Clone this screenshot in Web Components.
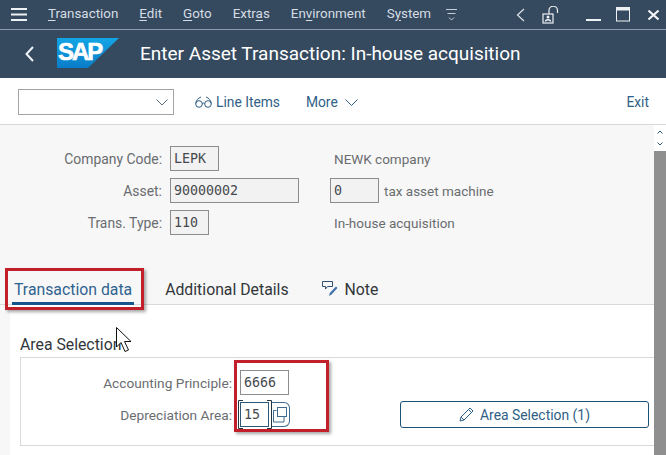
<!DOCTYPE html>
<html>
<head>
<meta charset="utf-8">
<title>Enter Asset Transaction</title>
<style>
  html, body { margin: 0; padding: 0; }
  body {
    position: relative;
    width: 666px;
    height: 455px;
    overflow: hidden;
    background: #fff;
    font-family: Roboto, "Liberation Sans", sans-serif;
  }
</style>
</head>
<body>
<sap-menu-bar>
  <sap-menu-item><u>T</u>ransaction</sap-menu-item>
  <sap-menu-item><u>E</u>dit</sap-menu-item>
  <sap-menu-item><u>G</u>oto</sap-menu-item>
  <sap-menu-item>Extr<u>a</u>s</sap-menu-item>
  <sap-menu-item>En<u>v</u>ironment</sap-menu-item>
  <sap-menu-item>S<u>y</u>stem</sap-menu-item>
</sap-menu-bar>
<sap-title-bar>Enter Asset Transaction: In-house acquisition</sap-title-bar>
<sap-toolbar></sap-toolbar>
<sap-main>
  <sap-header-form>
    <sap-label>Company Code:</sap-label>
    <sap-input style="--w:49px">LEPK</sap-input>
    <sap-text>NEWK company</sap-text>

    <sap-label>Asset:</sap-label>
    <sap-input style="--w:129px">90000002</sap-input>
    <div style="display:flex;align-items:center;gap:5px">
      <sap-input style="--w:49px">0</sap-input>
      <sap-text style="--pad:0">tax asset machine</sap-text>
    </div>

    <sap-label>Trans. Type:</sap-label>
    <sap-input style="--w:39px">110</sap-input>
    <sap-text>In-house acquisition</sap-text>
  </sap-header-form>
  <sap-tabs>
    <sap-tab active style="--left:14px">Transaction data</sap-tab>
    <sap-tab style="--left:33px">Additional Details</sap-tab>
    <sap-tab note style="--left:33px">Note</sap-tab>
  </sap-tabs>
  <sap-panel heading="Area Selection">
    <sap-area-form></sap-area-form>
  </sap-panel>
</sap-main>
<sap-callout style="--x:5px;--y:268px;--w:139px;--h:42px"></sap-callout>
<sap-callout style="--x:234px;--y:360px;--w:95px;--h:72px"></sap-callout>
<sap-cursor></sap-cursor>

<script>
  const define = (name, html, setup) => {
    customElements.define(name, class extends HTMLElement {
      constructor() {
        super();
        const shadow = this.attachShadow({ mode: 'open' });
        shadow.innerHTML = html;
        if (setup) setup(this, shadow);
      }
    });
  };

  define('sap-menu-bar', `
    <style>
      :host {
        display: flex;
        align-items: center;
        height: 29px;
        border-bottom: 1px solid #8b9cb0;
        background: #354a5f;
        color: #d6dde4;
        font-size: 13.400px;
      }
      .burger { width: 48px; display: flex; padding-left: 11px; box-sizing: border-box; flex: none; }
      .items { display: flex; align-items: center; gap: 21px; margin-top: -2px; }
      .overflow { margin-left: 15px; display: flex; }
      .tools { margin-left: auto; display: flex; align-items: center; }
      svg { display: block; }
    </style>
    <div class="burger">
      <svg width="16" height="13" viewBox="0 0 16 13"><path d="M0 1h16M0 6.5h16M0 12h16" stroke="#eef1f4" stroke-width="2"/></svg>
    </div>
    <div class="items"><slot></slot></div>
    <div class="overflow">
      <svg width="11" height="12" viewBox="0 0 11 12" fill="none" stroke="#c4ced8"><path d="M0 .5h11M1.5 4.5h8M3 8.5l2.5 2.5 2.5-2.5"/></svg>
    </div>
    <div class="tools">
      <svg width="9" height="14" viewBox="0 0 9 14" fill="none" stroke="#dfe4ea" stroke-width="1.2" style="margin-right:16px"><path d="M8 1L1.5 7 8 13"/></svg>
      <svg width="18" height="18" viewBox="0 0 18 18" fill="none" stroke="#eef1f4" stroke-width="1.2" style="margin-right:27px"><rect x="2" y="8" width="10" height="9"/><path d="M8 8V4.500a3.800 3.800 0 0 1 8.500 0V7"/><circle cx="7" cy="11" r="1.500" fill="#eef1f4" stroke="none"/><path d="M4.500 15.500c0-2.500 5-2.500 5 0" stroke-width="1.500"/></svg>
      <svg width="15" height="15" viewBox="0 0 15 15" style="margin-right:15px"><rect x="0" y="12" width="15" height="2" fill="#eef1f4"/></svg>
      <svg width="14" height="15" viewBox="0 0 14 15" fill="none" stroke="#eef1f4" style="margin-right:18px"><rect x=".5" y="1" width="13" height="13"/><rect x="0" y="0" width="14" height="3.500" fill="#eef1f4" stroke="none"/></svg>
      <svg width="11" height="10" viewBox="0 0 11 10" fill="none" stroke="#f4f6f8" stroke-width="2" style="margin-right:7px"><path d="M.5.5l10 9M10.500.5l-10 9"/></svg>
    </div>
  `);

  define('sap-menu-item', `
    <style>
      :host { display: block; white-space: nowrap; line-height: 18px; }
      ::slotted(u) { text-underline-offset: 2px; }
    </style>
    <slot></slot>
  `);

  define('sap-title-bar', `
    <style>
      :host {
        display: flex;
        align-items: center;
        height: 48px;
        background: #354a5f;
        color: #fff;
        font-size: 19px;
      }
      .back { margin-left: 25px; display: block; flex: none; }
      .logo { margin-left: 23px; margin-top: -2px; display: block; flex: none; }
      .title { margin-left: 21px; margin-top: -1px; white-space: nowrap; }
    </style>
    <svg class="back" width="9" height="16" viewBox="0 0 9 16" fill="none" stroke="#f0f3f6" stroke-width="2"><path d="M8 1L1.500 8 8 15"/></svg>
    <svg class="logo" width="62" height="30" viewBox="0 0 62 30">
      <defs>
        <linearGradient id="sap" x1="0" y1="0" x2="0" y2="1">
          <stop offset="0" stop-color="#12a5e6"/>
          <stop offset="1" stop-color="#0a7cc8"/>
        </linearGradient>
      </defs>
      <path d="M0 0H62L31 30H0Z" fill="url(#sap)"/>
      <text x="1" y="22" font-family="Liberation Sans" font-weight="700" font-size="24" letter-spacing="-2" fill="#fff" stroke="#fff" stroke-width=".6">SAP</text>
    </svg>
    <span class="title"><slot></slot></span>
  `);

  define('sap-toolbar', `
    <style>
      :host {
        display: flex;
        align-items: center;
        height: 46px;
        box-sizing: border-box;
        padding: 2px 17px 0 18px;
        background: #fff;
        color: #2f5f86;
        font-size: 13.800px;
      }
      svg { display: block; flex: none; }
      .combo {
        width: 156px;
        height: 26px;
        box-sizing: border-box;
        border: 1px solid #a3a3a3;
        display: flex;
        align-items: center;
        justify-content: flex-end;
        padding-right: 5px;
      }
      .action { display: flex; align-items: center; white-space: nowrap; }
      .exit { margin-left: auto; }
    </style>
    <div class="combo">
      <svg width="12" height="7" viewBox="0 0 12 7" fill="none" stroke="#5b6f82"><path d="M.5.5L6 6 11.500.5"/></svg>
    </div>
    <div class="action" style="margin-left:21px">
      <svg width="17" height="12" viewBox="0 0 17 12" fill="none" stroke="#2f5f86" style="margin-right:4px"><circle cx="4" cy="8" r="3.300"/><circle cx="13" cy="8" r="3.300"/><path d="M7.300 7.500c.8-.6 1.600-.6 2.400 0M.8 7.500C1 4.500 3 2 6 1M16.200 7.500C16 4.500 14 2 11 1"/></svg>
      Line Items
    </div>
    <div class="action" style="margin-left:26px">
      More
      <svg width="13" height="7" viewBox="0 0 13 7" fill="none" stroke="#2f5f86" style="margin-left:7px"><path d="M.5.5l6 6 6-6"/></svg>
    </div>
    <div class="action exit">Exit</div>
  `);

  define('sap-main', `
    <style>
      :host {
        display: grid;
        grid-template-columns: 1fr 12px;
        height: 331px;
        border-top: 1px solid #d9d9d9;
        box-sizing: border-box;
        background: #f7f7f7;
      }
      .content { min-width: 0; display: flex; flex-direction: column; }
      .scroll { display: flex; flex-direction: column; background: #8f8f8f; }
      .arrows {
        height: 26px;
        background: #fff;
        display: flex;
        flex-direction: column;
        align-items: center;
        gap: 8px;
        padding-top: 5px;
        box-sizing: border-box;
      }
      svg { display: block; }
    </style>
    <div class="content"><slot></slot></div>
    <div class="scroll">
      <div class="arrows">
        <svg width="6" height="4" viewBox="0 0 6 4" fill="none" stroke="#2f5878"><path d="M.5 3.500L3 1l2.500 2.500"/></svg>
        <svg width="6" height="4" viewBox="0 0 6 4" fill="none" stroke="#2f5878"><path d="M.5.500L3 3 5.500.500"/></svg>
      </div>
    </div>
  `);

  define('sap-header-form', `
    <style>
      :host {
        display: grid;
        grid-template-columns: 162px 168px auto;
        grid-auto-rows: 25px;
        row-gap: 7px;
        column-gap: 0;
        padding-top: 21px;
        height: 110px;
        align-items: center;
        font-size: 13.500px;
        color: #666;
        box-sizing: content-box;
      }
      ::slotted(sap-input) { margin-left: 8px; }
      ::slotted(sap-label) { font-size: 13.900px; }
    </style>
    <slot></slot>
  `);

  define('sap-label', `
    <style>
      :host { display: block; text-align: right; white-space: nowrap; color: #6a6d70; }
    </style>
    <slot></slot>
  `);

  define('sap-text', `
    <style>
      :host { display: block; padding-left: var(--pad, 4px); white-space: nowrap; color: #6a6d70; }
    </style>
    <slot></slot>
  `);

  define('sap-input', `
    <style>
      :host {
        display: block;
        width: var(--w);
        height: 25px;
        box-sizing: border-box;
        border: 1px solid var(--line, #8c8c8c);
        background: var(--bg, #f2f2f2);
        color: #45494d;
        padding-left: 3px;
        font: 13.300px/23px "DejaVu Sans Mono", monospace;
        white-space: nowrap;
      }
    </style>
    <slot></slot>
  `);

  define('sap-tabs', `
    <style>
      :host {
        display: flex;
        align-items: flex-start;
        height: 49px;
        box-sizing: border-box;
        padding-top: 21px;
        border-bottom: 1px solid #d9d9d9;
        font-size: 15.800px;
      }
    </style>
    <slot></slot>
  `);

  define('sap-tab', `
    <style>
      :host {
        display: flex;
        align-items: center;
        gap: 7px;
        height: 24px;
        margin-left: var(--left, 0);
        color: #32363a;
        white-space: nowrap;
        position: relative;
      }
      :host([active]) { color: #2f6390; }
      :host([active])::after {
        content: "";
        position: absolute;
        left: -2px;
        right: -2px;
        top: 25px;
        height: 3px;
        background: #17568c;
      }
      svg { display: none; flex: none; }
      :host([note]) svg { display: block; }
    </style>
    <svg width="16" height="16" viewBox="0 0 16 16" fill="none"><path d="M.5.500h10v5H5.500L3.500 8V5.500h-3z" stroke="#32506e"/><path d="M7 15l.8-3L14 5.500l1.500 1.500L9.500 13.500z" fill="#3f6fa8"/></svg>
    <slot></slot>
  `);

  define('sap-panel', `
    <style>
      :host {
        display: block;
        flex: 1;
        margin-left: 10px;
        padding: 0 0 0 10px;
        background: #fff;
      }
      h3 {
        margin: 0;
        height: 52px;
        box-sizing: border-box;
        padding-top: 29px;
        font-weight: 400;
        font-size: 15.800px;
        line-height: 22px;
        color: #32363a;
        white-space: nowrap;
      }
      .box {
        height: 89px;
        box-sizing: border-box;
        border: 1px solid #d9d9d9;
        border-right: 0;
      }
    </style>
    <h3></h3>
    <div class="box"><slot></slot></div>
  `, (host, shadow) => {
    shadow.querySelector('h3').textContent = host.getAttribute('heading');
  });

  define('sap-area-form', `
    <style>
      :host {
        display: grid;
        grid-template-columns: 211px 168px auto;
        grid-auto-rows: 25px;
        row-gap: 7px;
        padding-top: 12px;
        align-items: center;
        font-size: 13.700px;
      }
      .fld { margin-left: 8px; display: flex; align-items: center; position: relative; }
      .focus { --line: #2f5878; --bg: #fff; }
      .bracket { position: absolute; left: -2px; top: -2px; width: 34px; height: 29px; }
      .vh {
        width: 19px;
        height: 25px;
        margin-left: 2px;
        box-sizing: border-box;
        border: 1px solid #3f6a8c;
        border-left: 0;
        border-radius: 0 6px 6px 0;
        display: flex;
        align-items: center;
        justify-content: center;
      }
      .btn {
        grid-row: 2;
        grid-column: 3;
        width: 249px;
        height: 27px;
        box-sizing: border-box;
        border: 1px solid #1b5276;
        border-radius: 3px;
        color: #2f5f86;
        font-size: 13.900px;
        display: flex;
        align-items: center;
        justify-content: center;
        gap: 6px;
        white-space: nowrap;
        background: #fff;
      }
      svg { display: block; flex: none; }
    </style>
    <sap-label>Accounting Principle:</sap-label>
    <div class="fld"><sap-input style="--w:49px;--bg:#fff">6666</sap-input></div>
    <div></div>
    <sap-label>Depreciation Area:</sap-label>
    <div class="fld">
      <sap-input class="focus" style="--w:29px">15</sap-input>
      <svg class="bracket" viewBox="0 0 34 29" fill="none" stroke="#26343f"><path d="M5 .5H.5V28.500H5M29 .5h4.500V28.500H29"/></svg>
      <div class="vh">
        <svg width="15" height="16" viewBox="0 0 15 16" fill="none" stroke="#3f6a8c"><path d="M3.500 3.500H.5V15H11v-5"/><rect x="4.500" y=".5" width="9" height="9"/></svg>
      </div>
    </div>
    <div class="btn">
      <svg width="15" height="15" viewBox="0 0 15 15" fill="none" stroke="#2f5f86"><path d="M1 14l1-4L11 1l3 3-9 9zM2 10l3 3M9.500 2.500l3 3"/></svg>
      Area Selection (1)
    </div>
  `);

  define('sap-callout', `
    <style>
      :host {
        position: absolute;
        left: var(--x);
        top: var(--y);
        width: var(--w);
        height: var(--h);
        box-sizing: border-box;
        border: 3px solid #c1202b;
        box-shadow: 2px 2px 3px rgba(0, 0, 0, .35);
        pointer-events: none;
      }
    </style>
  `);

  define('sap-cursor', `
    <style>
      :host { position: absolute; left: 116px; top: 327px; width: 16px; height: 26px; }
      svg { display: block; }
    </style>
    <svg width="16" height="26" viewBox="0 0 16 26"><path d="M.5.5V20l4.500-4.500 4 9 3.500-1.500-4-8.500h6.500z" fill="#fff" stroke="#111"/></svg>
  `);
</script>
</body>
</html>
